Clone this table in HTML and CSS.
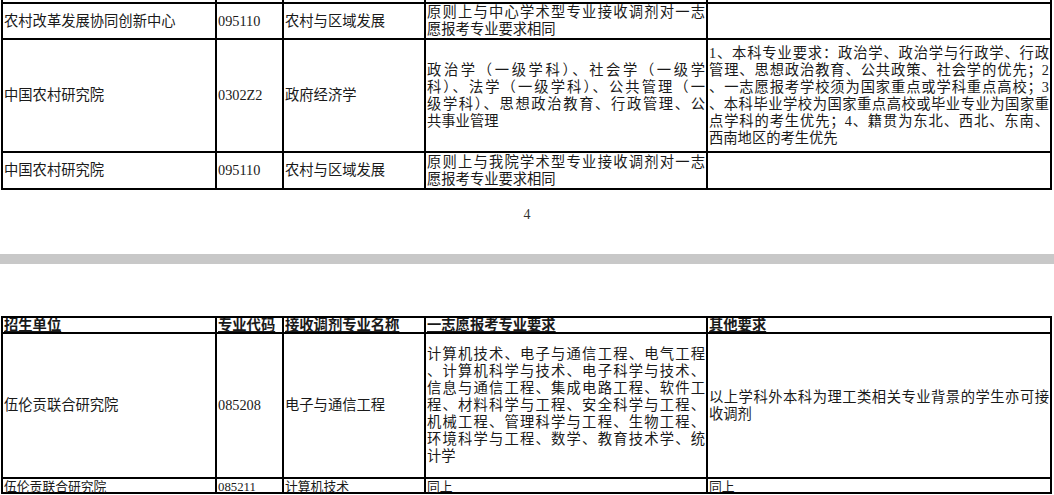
FILE: index.html
```html
<!DOCTYPE html>
<html lang="zh-CN">
<head>
<meta charset="utf-8">
<title>调剂专业表</title>
<link rel="stylesheet" href="styles.css">
</head>
<body>
<section class="sheet sheet-top">
  <table class="grid grid-top">
    <colgroup><col class="c1"><col class="c2"><col class="c3"><col class="c4"><col class="c5"></colgroup>
    <tr class="r0"><td>农村改革发展协同创新中心</td><td></td><td>农村与区域</td><td></td><td>同上</td></tr>
    <tr class="r1">
      <td>农村改革发展协同创新中心</td>
      <td>095110</td>
      <td>农村与区域发展</td>
      <td><span class="ln j">原则上与中心学术型专业接收调剂对一志</span><span class="ln">愿报考专业要求相同</span></td>
      <td></td>
    </tr>
    <tr class="r2">
      <td>中国农村研究院</td>
      <td>0302Z2</td>
      <td>政府经济学</td>
      <td><span class="ln j">政治学（一级学科）、社会学（一级学</span><span class="ln j">科）、法学（一级学科）、公共管理（一</span><span class="ln j">级学科）、思想政治教育、行政管理、公</span><span class="ln">共事业管理</span></td>
      <td><span class="ln j">1、本科专业要求：政治学、政治学与行政学、行政</span><span class="ln j">管理、思想政治教育、公共政策、社会学的优先；2</span><span class="ln j">、一志愿报考学校须为国家重点或学科重点高校；3</span><span class="ln j">、本科毕业学校为国家重点高校或毕业专业为国家重</span><span class="ln j">点学科的考生优先；4、籍贯为东北、西北、东南、</span><span class="ln">西南地区的考生优先</span></td>
    </tr>
    <tr class="r3">
      <td>中国农村研究院</td>
      <td>095110</td>
      <td>农村与区域发展</td>
      <td><span class="ln j">原则上与我院学术型专业接收调剂对一志</span><span class="ln">愿报考专业要求相同</span></td>
      <td></td>
    </tr>
  </table>
  <div class="pageno">4</div>
</section>
<div class="divider"></div>
<section class="sheet sheet-bottom">
  <table class="grid grid-bottom">
    <colgroup><col class="c1"><col class="c2"><col class="c3"><col class="c4"><col class="c5"></colgroup>
    <tr class="rh">
      <td>招生单位</td><td>专业代码</td><td>接收调剂专业名称</td><td>一志愿报考专业要求</td><td>其他要求</td>
    </tr>
    <tr class="rb1">
      <td>伍伦贡联合研究院</td>
      <td>085208</td>
      <td>电子与通信工程</td>
      <td><span class="ln j">计算机技术、电子与通信工程、电气工程</span><span class="ln j">、计算机科学与技术、电子科学与技术、</span><span class="ln j">信息与通信工程、集成电路工程、软件工</span><span class="ln j">程、材料科学与工程、安全科学与工程、</span><span class="ln j">机械工程、管理科学与工程、生物工程、</span><span class="ln j">环境科学与工程、数学、教育技术学、统</span><span class="ln">计学</span></td>
      <td><span class="ln j">以上学科外本科为理工类相关专业背景的学生亦可接</span><span class="ln">收调剂</span></td>
    </tr>
    <tr class="rb2">
      <td>伍伦贡联合研究院</td><td>085211</td><td>计算机技术</td><td>同上</td><td>同上</td>
    </tr>
  </table>
</section>
</body>
</html>
```

FILE: styles.css
```css
html, body {
  margin: 0;
  padding: 0;
  background: #ffffff;
}

body {
  width: 1054px;
  height: 495px;
  overflow: hidden;
  font-family: "Liberation Serif", "Noto Sans CJK SC", serif;
  font-size: 14.3px;
  color: #1a1a1a;
}

.sheet {
  display: flex;
  flex-direction: column;
}

.grid {
  border-collapse: collapse;
  table-layout: fixed;
  width: 1049px;
  margin-left: 1px;
}

.c1 { width: 214px; }
.c2 { width: 67px; }
.c3 { width: 142px; }
.c4 { width: 282px; }
.c5 { width: 344px; }

.grid td {
  border: 2px solid #000;
  padding: 0 1px;
  line-height: 17px;
  vertical-align: middle;
  white-space: nowrap;
  overflow: hidden;
}

.ln {
  display: block;
}

.j {
  text-align: justify;
  text-align-last: justify;
}

.grid-top {
  margin-top: -17px;
}

.r0 td {
  height: 15px;
  vertical-align: bottom;
}

.r1 td { height: 31px; }
.r2 td { height: 111px; }
.r3 td { height: 35px; }

.pageno {
  margin-top: 17px;
  text-align: center;
  font-size: 14px;
  line-height: 16px;
  color: #333;
}

.divider {
  height: 10px;
  margin-top: 31px;
  background: #c8c8c8;
}

.sheet-bottom {
  margin-top: 52px;
}

.rh td {
  height: 14px;
  line-height: 14px;
  font-weight: bold;
  text-decoration: underline;
  vertical-align: bottom;
}

.rb1 td { height: 143px; }

.grid .rb2 td {
  height: 10px;
  padding-top: 3px;
  line-height: 10px;
  font-size: 12.8px;
  vertical-align: top;
  overflow: visible;
}
```
